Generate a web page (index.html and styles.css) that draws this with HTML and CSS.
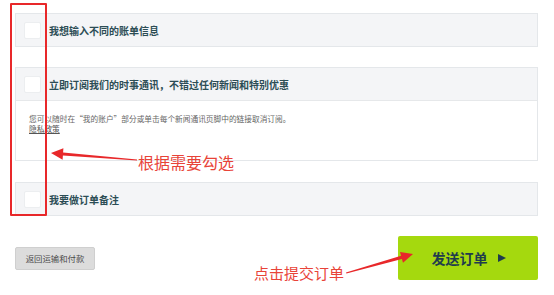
FILE: index.html
```html
<!DOCTYPE html>
<html lang="zh-CN">
<head>
<meta charset="utf-8">
<title>订单</title>
<link rel="stylesheet" href="styles.css">
</head>
<body>
<div class="page">
  <div class="panel">
    <div class="panel-head"><span class="check"></span><span class="label">我想输入不同的账单信息</span></div>
  </div>
  <div class="panel">
    <div class="panel-head"><span class="check"></span><span class="label">立即订阅我们的时事通讯，不错过任何新闻和特别优惠</span></div>
    <div class="panel-body">
      <p class="note">您可以随时在“我的账户”部分或单击每个新闻通讯页脚中的链接取消订阅。</p>
      <a class="policy" href="#">隐私政策</a>
    </div>
  </div>
  <div class="panel">
    <div class="panel-head"><span class="check"></span><span class="label">我要做订单备注</span></div>
  </div>
  <div class="actions">
    <button class="back">返回运输和付款</button>
    <button class="send">发送订单<span class="tri"></span></button>
  </div>

  <div class="mark-box"></div>
  <span class="anno anno-check">根据需要勾选</span>
  <span class="anno anno-send">点击提交订单</span>
  <svg class="arrows" width="554" height="295" viewBox="0 0 554 295">
    <polygon fill="#e8282a" points="51,153 63.4,148.3 63.1,152.4 137,159.5 137,160.6 62.9,155.6 62.6,159.7"/>
    <polygon fill="#e8282a" points="413,254 400,252 401.1,255.8 346,272.5 346.4,273.6 401.9,258.9 403,262.8"/>
  </svg>
</div>
</body>
</html>
```

FILE: styles.css
```css
* { box-sizing: border-box; }
html, body { margin: 0; padding: 0; background: #fff; }
body {
  font-family: "Noto Sans CJK SC", "Noto Sans", sans-serif;
  width: 554px;
  height: 295px;
  overflow: hidden;
}
.page {
  position: relative;
  width: 554px;
  height: 295px;
  padding: 13px 16px 0 15px;
}
.panel {
  border: 1px solid #e4e7ea;
  background: #f4f5f7;
  margin-bottom: 20px;
}
.panel:nth-child(2) { margin-bottom: 21px; }
.panel-head {
  height: 32px;
  display: flex;
  align-items: center;
  padding-left: 8px;
  gap: 8px;
}
.check {
  width: 17px;
  height: 17px;
  background: #fff;
  border-radius: 2px;
  border: 1px solid #eceef0;
  flex: none;
}
.label {
  font-size: 10px;
  font-weight: 700;
  color: #2c4d55;
}
.panel-body {
  background: #fff;
  border-top: 1px solid #e6e8ea;
  height: 60px;
  padding: 13px 13px 0;
}
.note {
  margin: 0;
  font-size: 7.7px;
  line-height: 10px;
  color: #666;
}
.policy {
  display: block;
  width: max-content;
  font-size: 7.7px;
  line-height: 10px;
  color: #555;
  text-decoration: underline;
}
.actions {
  display: flex;
  justify-content: space-between;
  align-items: center;
}
.back {
  width: 80px;
  height: 23px;
  background: #dcdcdc;
  border: 1px solid #cfcfcf;
  border-radius: 2px;
  font-family: inherit;
  font-size: 8.4px;
  color: #4a4a4a;
  padding: 0;
}
.send {
  width: 140px;
  height: 44px;
  background: #a5d90e;
  border: none;
  border-radius: 2px;
  font-family: inherit;
  font-size: 14px;
  font-weight: 700;
  color: #1f3c4d;
  display: flex;
  align-items: center;
  justify-content: center;
  gap: 10px;
  padding: 0 0 0 1px;
}
.tri {
  width: 0;
  height: 0;
  border-left: 8px solid #1f3c4d;
  border-top: 4.5px solid transparent;
  border-bottom: 4.5px solid transparent;
}
.mark-box {
  position: absolute;
  left: 10px;
  top: 3px;
  width: 37px;
  height: 213px;
  border: 2px solid #e8282a;
  border-radius: 1px;
}
.anno {
  position: absolute;
  color: #e84338;
  white-space: nowrap;
  line-height: 1;
}
.anno-check {
  left: 138px;
  top: 154px;
  font-size: 16px;
}
.anno-send {
  left: 254px;
  top: 265px;
  font-size: 15px;
}
.arrows {
  position: absolute;
  left: 0;
  top: 0;
  pointer-events: none;
}
```
